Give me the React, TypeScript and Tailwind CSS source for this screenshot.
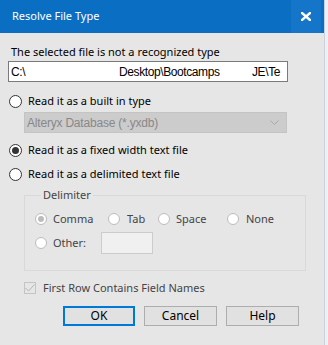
import React from "react";

const ui = { fontFamily: '"Noto Sans", "Open Sans", sans-serif' };
const arial = { fontFamily: '"Liberation Sans", Arial, sans-serif' };

function Radio({ checked = false, disabled = false }: { checked?: boolean; disabled?: boolean }) {
  if (disabled) {
    return (
      <span className="flex h-[12px] w-[12px] shrink-0 items-center justify-center rounded-full border border-[#bcbcbc] bg-white">
        {checked && <span className="h-[6px] w-[6px] rounded-full bg-[#bcbcbc]" />}
      </span>
    );
  }
  return (
    <span className="flex h-[13px] w-[13px] shrink-0 items-center justify-center rounded-full border border-[#333333] bg-white">
      {checked && <span className="h-[7px] w-[7px] rounded-full bg-[#333333]" />}
    </span>
  );
}

export default function App() {
  return (
    <div className="flex h-[345px] w-[328px] overflow-hidden bg-[#f0f0f0]" style={ui}>
      <div className="flex h-full w-[324px] flex-col bg-[#e6e6e6]">
        {/* Title bar */}
        <div className="flex h-[33px] shrink-0 items-center bg-[#0a6fc3] pl-[12px]">
          <span className="text-[11px] text-white">Resolve File Type</span>
          <div className="ml-auto mr-[3px] flex h-[33px] w-[30px] items-center justify-center bg-[#1576c9]">
            <svg width="10" height="9" viewBox="0 0 10 9">
              <path d="M1 1 L9 8 M9 1 L1 8" stroke="white" strokeWidth="2.4" strokeLinecap="square" />
            </svg>
          </div>
        </div>

        <div className="flex flex-col pl-[8px]">
          <div className="mt-[11px] h-[16px] pl-[3px] text-[11px] leading-[16px] text-black">
            The selected file is not a recognized type
          </div>
          <div
            className="mt-[1px] flex h-[21px] w-[280px] items-center overflow-hidden border border-[#7a7a7a] bg-white text-[12px] tracking-[-0.4px] text-black"
            style={arial}
          >
            <span className="ml-[2px] w-[108px] shrink-0">C:\</span>
            <span className="w-[96px] shrink-0">Desktop\Bootcamps</span>
            <span className="ml-[37px] shrink-0">JE\Te</span>
          </div>

          {/* Radio 1 */}
          <div className="mt-[11px] flex h-[16px] items-center gap-[6px] pl-[1px] text-[11px] text-black">
            <Radio />
            <span>Read it as a built in type</span>
          </div>
          <div
            className="ml-[16px] mt-[3px] flex h-[21px] w-[263px] items-center border border-[#c4c4c4] bg-[#cccccc] pl-[2px] pr-[7px] text-[12px] tracking-[-0.2px] text-[#888888]"
            style={arial}
          >
            <span>Alteryx Database (*.yxdb)</span>
            <svg className="ml-auto" width="9" height="6" viewBox="0 0 9 6">
              <path d="M0.5 0.5 L4.5 4.5 L8.5 0.5" fill="none" stroke="#a8a8a8" strokeWidth="1" />
            </svg>
          </div>

          <div className="mt-[9px] flex h-[16px] items-center gap-[6px] pl-[1px] text-[11px] text-black">
            <Radio checked />
            <span>Read it as a fixed width text file</span>
          </div>
          <div className="mt-[8px] flex h-[16px] items-center gap-[6px] pl-[1px] text-[11px] text-black">
            <Radio />
            <span>Read it as a delimited text file</span>
          </div>

          <fieldset className="ml-[16px] mt-[5px] w-[282px] border border-[#d9d9d9] pb-[19px] pl-[10px]">
            <legend className="ml-[6px] px-[2px] text-[11px] leading-[16px] text-[#444444]">Delimiter</legend>
            <div className="mt-[8px] flex h-[16px] items-center text-[11px] text-[#444444]">
              <Radio checked disabled />
              <span className="ml-[6px] w-[55px]">Comma</span>
              <Radio disabled />
              <span className="ml-[7px] w-[31px]">Tab</span>
              <Radio disabled />
              <span className="ml-[6px] w-[51px]">Space</span>
              <Radio disabled />
              <span className="ml-[7px]">None</span>
            </div>
            <div className="mt-[8px] flex h-[16px] items-center text-[11px] text-[#444444]">
              <Radio disabled />
              <span className="ml-[6px] w-[48px]">Other:</span>
              <div className="h-[22px] w-[52px] border border-[#cccccc] bg-[#f0f0f0]" />
            </div>
          </fieldset>

          <div className="ml-[16px] mt-[9px] flex h-[16px] items-center gap-[7px] text-[11px] text-[#444444]">
            <span className="flex h-[12px] w-[12px] items-center justify-center border border-[#c4c4c4]">
              <svg width="10" height="8" viewBox="0 0 10 8">
                <path d="M0.5 4 L3.5 7 L9.5 0.5" fill="none" stroke="#b5b5b5" strokeWidth="1" />
              </svg>
            </span>
            <span>First Row Contains Field Names</span>
          </div>

          <div className="ml-[55px] mt-[10px] flex gap-[9px] text-[12px] text-black">
            <button className="flex h-[20px] w-[72px] items-center justify-center border-2 border-[#0078d7] bg-[#e1e1e1]">
              OK
            </button>
            <button className="flex h-[20px] w-[73px] items-center justify-center border border-[#adadad] bg-[#e1e1e1]">
              Cancel
            </button>
            <button className="flex h-[20px] w-[73px] items-center justify-center border border-[#adadad] bg-[#e1e1e1]">
              Help
            </button>
          </div>
        </div>
      </div>
      <div className="h-full w-[1px] bg-[#c9d3df]" />
    </div>
  );
}
